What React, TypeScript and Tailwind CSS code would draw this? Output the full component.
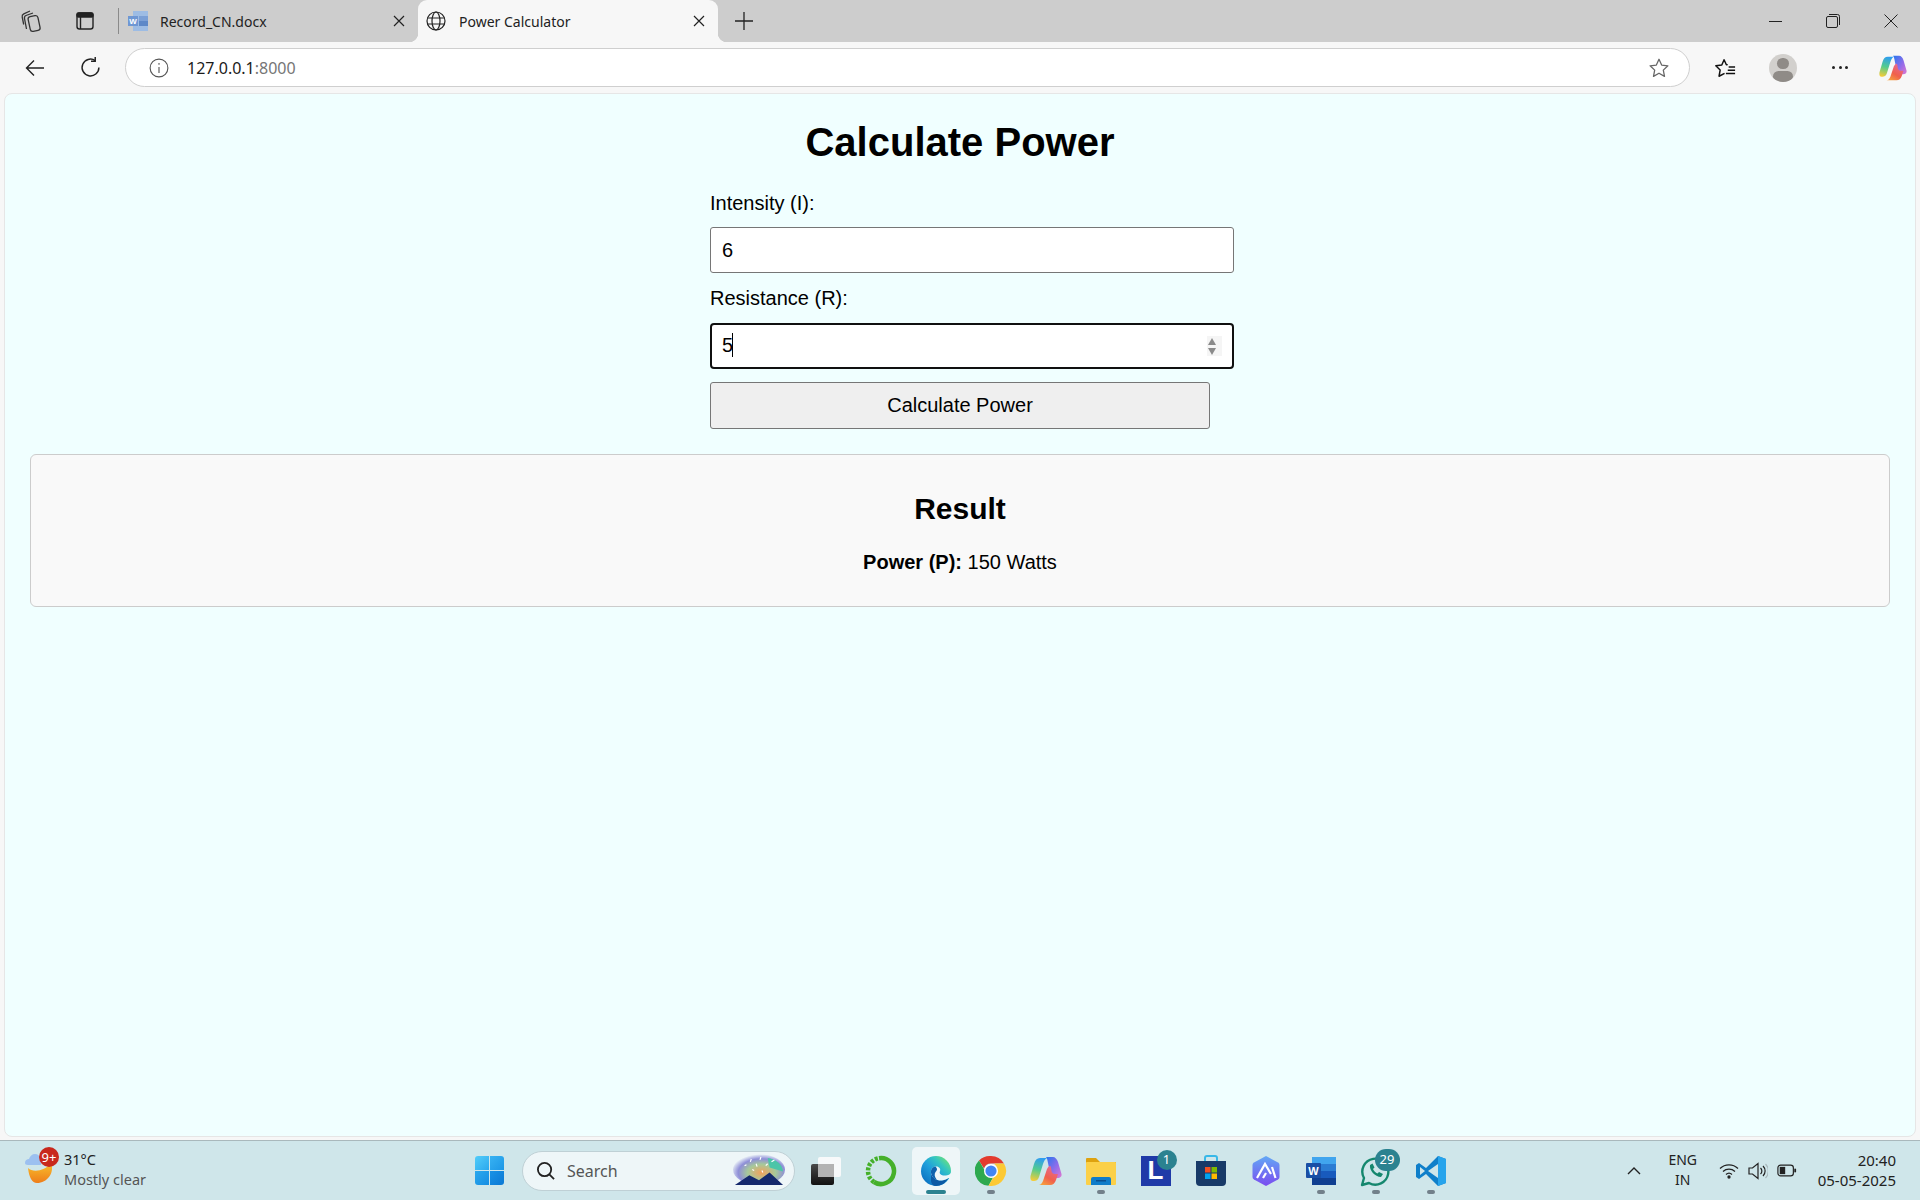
import React from 'react';

// taskbar app icons, all on a 32x32 box
function EdgeIcon() {
    return (
        <svg viewBox="0 0 32 32" className="w-[32px] h-[32px]">
            <defs>
                <linearGradient id="edgeA" x1="0.1" y1="0.9" x2="0.9" y2="0.1">
                    <stop offset="0" stopColor="#0b6fc0" />
                    <stop offset="0.45" stopColor="#1f9fdc" />
                    <stop offset="0.75" stopColor="#35c6c0" />
                    <stop offset="1" stopColor="#6de07a" />
                </linearGradient>
            </defs>
            <circle cx="16" cy="16" r="15" fill="url(#edgeA)" />
            <path d="M11 18C12 23 17 26 22 25.500C25 25 27 24 28.500 23C26 28 21 31 16 31C13 31 11.500 29 11 26Z" fill="#0c59a4" />
            <path d="M32 15C31 20 27 21 23 20.500C20 20 19 18 20 16C21 14 19 11 15.500 11.500C12 12 10.500 15 11 18C12 23 17 26 22 25.500C25 25 27 24 28.500 23L32 23Z" fill="#eef6f8" />
            <path d="M15.500 11.500C12 12 10.500 15 11 18C12 22 14 24 17 25C14.500 22 14 19 15.500 17C17 15.500 18 14 15.500 11.500Z" fill="#0f62ad" />
        </svg>
    );
}

function ChromeIcon() {
    return (
        <svg viewBox="0 0 32 32" className="w-[32px] h-[32px]">
            <path d="M16 1a15 15 0 0 1 13 7.500H16a7.500 7.500 0 0 0-7 5L4 5.500A15 15 0 0 1 16 1z" fill="#e33b2e" />
            <path d="M4 5.500l6.500 11.300a7.500 7.500 0 0 0 7.500 5.700L13.500 30.800A15 15 0 0 1 4 5.500z" fill="#2da94f" />
            <path d="M29 8.500A15 15 0 0 1 13.500 30.800l6.500-11.300a7.500 7.500 0 0 0-1-11z" fill="#fcc934" />
            <circle cx="16" cy="16" r="7" fill="#fff" />
            <circle cx="16" cy="16" r="5.600" fill="#4285f4" />
        </svg>
    );
}

function CopilotIcon({size}: {size: number}) {
    const id = `cp${size}`;
    return (
        <svg viewBox="0 0 32 32" style={{width: size, height: size}}>
            <defs>
                <linearGradient id={`${id}a`} x1="0.5" y1="0" x2="0.3" y2="1">
                    <stop offset="0" stopColor="#2f9df0" />
                    <stop offset="0.5" stopColor="#52cc8e" />
                    <stop offset="1" stopColor="#f4cc38" />
                </linearGradient>
                <linearGradient id={`${id}b`} x1="0" y1="0" x2="1" y2="1">
                    <stop offset="0" stopColor="#2677ee" />
                    <stop offset="0.55" stopColor="#8f6cea" />
                    <stop offset="1" stopColor="#e078d0" />
                </linearGradient>
                <linearGradient id={`${id}c`} x1="0.8" y1="0" x2="0.2" y2="1">
                    <stop offset="0" stopColor="#e66a9c" />
                    <stop offset="0.6" stopColor="#f0604c" />
                    <stop offset="1" stopColor="#f6a13c" />
                </linearGradient>
            </defs>
            <path d="M10 3h7c-2 1-3 3-4 6L9 22c-1 3-3 4-5 4H3c-2 0-3-2-2.500-5L4 9c1-4 3-6 6-6z" fill={`url(#${id}a)`} />
            <path d="M16 2h7c2 0 4 2 5 5l3.500 12c.5 2-1 4-4 4H24c-2 0-3-1-3.500-3L18 8c-.5-3-1-5-2-6z" fill={`url(#${id}b)`} />
            <path d="M20 11c-1 0-2 1-3 3l-4 12c-1 2-2 4-4.500 4H20c3 0 5-2 6-5l2-6h-3c-2 0-3-1-3.500-3-.3-3-.5-5-1.500-5z" fill={`url(#${id}c)`} />
        </svg>
    );
}

function TaskIcon({children, dot, active}: {children: React.ReactNode, dot?: boolean, active?: boolean}) {
    return (
        <div className="w-[55px] flex justify-center">
            <div className={`relative w-[48px] h-[48px] flex items-center justify-center rounded-[5px] ${active ? 'bg-[#eef6f8]' : ''}`}>
                <div className="relative w-[32px] h-[32px]">{children}</div>
                {active && <div className="absolute bottom-[1px] left-[14px] w-[20px] h-[4px] rounded-full bg-[#2b8290]" />}
                {dot && <div className="absolute bottom-[1px] left-[20px] w-[8px] h-[4px] rounded-full bg-[#72808a]" />}
            </div>
        </div>
    );
}

function Badge({text, wide}: {text: string, wide?: boolean}) {
    return (
        <div className={`absolute flex items-center justify-center rounded-full bg-[#2b8290] text-white text-[13px] leading-none ${wide ? 'w-[25px] h-[22px] -top-[6px] left-[15px]' : 'w-[20px] h-[20px] -top-[5px] left-[17px]'}`}>
            {text}
        </div>
    );
}

export default function App() {
    return (
        <div className="h-screen w-screen overflow-hidden flex flex-col bg-[#f7f7f7] font-['Noto_Sans',sans-serif] text-black">
            {/* tab strip */}
            <div className="h-[42px] shrink-0 flex items-end bg-[#cdcdcd]">
                <div className="h-[42px] w-[64px] flex items-center justify-center">
                    <svg viewBox="0 0 24 24" className="w-[24px] h-[24px]" fill="none" stroke="#333" strokeWidth="1.300">
                        <rect x="9" y="7" width="10" height="15" rx="2.500" transform="rotate(-12 14 14)" />
                        <path d="M6.500 20 4.500 9.500c-.3-1.500.3-2.500 1.500-3L13 4" />
                        <path d="M3.700 15.500 2.200 8c-.3-1.500.4-2.600 1.600-3.200L10 2" />
                    </svg>
                </div>
                <div className="h-[42px] w-[42px] flex items-center justify-center">
                    <svg viewBox="0 0 20 20" className="w-[20px] h-[20px]" fill="none" stroke="#222" strokeWidth="1.400">
                        <rect x="2" y="2" width="16" height="16" rx="2.500" />
                        <rect x="2" y="2" width="16" height="4" rx="1.500" fill="#222" />
                        <path d="M5.500 6v12" />
                    </svg>
                </div>
                <div className="h-[26px] w-px bg-[#8a8a8a] mb-[8px] ml-[12px]" />
                <div className="h-[42px] w-[299px] flex items-center pl-[9px] pr-[13px]">
                    <svg viewBox="0 0 20 20" className="w-[20px] h-[20px] shrink-0">
                        <rect x="5" y="0" width="15" height="20" fill="#9dbce4" />
                        <rect x="11" y="5" width="9" height="5" fill="#7a9fd6" />
                        <rect x="11" y="10" width="9" height="5" fill="#5d88c8" />
                        <rect x="0" y="5" width="10" height="10" fill="#6f97d3" />
                        <text x="5" y="13" textAnchor="middle" fontSize="8" fontWeight="700" fill="#fff" fontFamily="Liberation Sans">W</text>
                    </svg>
                    <span className="ml-[12px] text-[14px] text-[#222] flex-1">Record_CN.docx</span>
                    <svg viewBox="0 0 12 12" className="w-[12px] h-[12px]" stroke="#222" strokeWidth="1.200"><path d="M1 1l10 10M11 1L1 11" /></svg>
                </div>
                <div className="relative h-[42px] w-[300px] flex items-center bg-[#f7f7f7] rounded-t-[9px] pl-[8px] pr-[13px]">
                    <div className="absolute right-full bottom-0 w-[9px] h-[9px] bg-[radial-gradient(circle_at_0_0,#cdcdcd_9px,#f7f7f7_9.5px)]" />
                    <div className="absolute left-full bottom-0 w-[9px] h-[9px] bg-[radial-gradient(circle_at_100%_0,#cdcdcd_9px,#f7f7f7_9.5px)]" />
                    <svg viewBox="0 0 20 20" className="w-[20px] h-[20px] shrink-0" fill="none" stroke="#222" strokeWidth="1.200">
                        <circle cx="10" cy="10" r="9" />
                        <ellipse cx="10" cy="10" rx="4" ry="9" />
                        <path d="M1.500 7h17M1.500 13h17" />
                    </svg>
                    <span className="ml-[13px] text-[14px] text-[#222] flex-1">Power Calculator</span>
                    <svg viewBox="0 0 12 12" className="w-[12px] h-[12px]" stroke="#222" strokeWidth="1.200"><path d="M1 1l10 10M11 1L1 11" /></svg>
                </div>
                <div className="h-[42px] w-[52px] flex items-center justify-center">
                    <svg viewBox="0 0 18 18" className="w-[18px] h-[18px]" stroke="#222" strokeWidth="1.300"><path d="M9 0v18M0 9h18" /></svg>
                </div>
                <div className="flex-1" />
                <div className="h-[42px] w-[58px] flex items-center justify-center">
                    <div className="w-[13px] h-px bg-[#222]" />
                </div>
                <div className="h-[42px] w-[58px] flex items-center justify-center">
                    <svg viewBox="0 0 14 14" className="w-[14px] h-[14px]" fill="none" stroke="#222" strokeWidth="1">
                        <rect x="0.5" y="2.500" width="11" height="11" rx="1.500" />
                        <path d="M3 .5h8.500a2 2 0 0 1 2 2V11" />
                    </svg>
                </div>
                <div className="h-[42px] w-[58px] flex items-center justify-center">
                    <svg viewBox="0 0 14 14" className="w-[14px] h-[14px]" stroke="#222" strokeWidth="1"><path d="M.5.5l13 13M13.500.5l-13 13" /></svg>
                </div>
            </div>

            {/* address bar row */}
            <div className="h-[51px] shrink-0 flex items-center">
                <div className="w-[70px] flex items-center justify-center">
                    <svg viewBox="0 0 20 20" className="w-[20px] h-[20px]" fill="none" stroke="#222" strokeWidth="1.400"><path d="M19 10H1.500M9 2.500 1.500 10 9 17.500" /></svg>
                </div>
                <div className="w-[40px] flex items-center justify-center">
                    <svg viewBox="0 0 20 20" className="w-[21px] h-[21px]" fill="none" stroke="#222" strokeWidth="1.400"><path d="M14.500 3.400A8 8 0 1 0 18 10" /><path d="M14.500 0v4h-4" /></svg>
                </div>
                <div className="ml-[15px] w-[1565px] h-[39px] flex items-center bg-white border border-[#cfcfcf] rounded-full pl-[23px] pr-[19px]">
                    <svg viewBox="0 0 18 18" className="w-[20px] h-[20px]" fill="none" stroke="#555" strokeWidth="1"><circle cx="9" cy="9" r="8" /><path d="M9 8v5.500M9 4.500v1.500" /></svg>
                    <span className="ml-[18px] text-[16px] text-[#1b1b1b] flex-1">127.0.0.1<span className="text-[#767676]">:8000</span></span>
                    <svg viewBox="0 0 24 24" className="w-[22px] h-[22px]" fill="none" stroke="#666" strokeWidth="1.400" strokeLinejoin="round"><path d="M12 2.500l2.900 6.300 6.800.8-5 4.700 1.300 6.800-6-3.400-6 3.400 1.300-6.800-5-4.700 6.800-.8z" /></svg>
                </div>
                <div className="ml-[23px] w-[24px] flex items-center justify-center">
                    <svg viewBox="0 0 24 24" className="w-[22px] h-[22px]" fill="none" stroke="#111" strokeWidth="1.600" strokeLinejoin="round"><path d="M15 8.300 13.500 8.500 11 3 8.500 8.700 2 9.600l4.700 4.600L5.500 21l6-3.200M16 11h7M15 14.500h8M13 18h10" /></svg>
                </div>
                <div className="ml-[32px] w-[28px] h-[28px] rounded-full bg-[#d2d0cd] overflow-hidden flex flex-col items-center">
                    <div className="w-[12px] h-[12px] mt-[4px] rounded-full bg-[#8f8b87]" />
                    <div className="w-[20px] h-[12px] mt-[2px] rounded-full bg-[#8f8b87]" />
                </div>
                <div className="ml-[35px] flex gap-[3.5px]">
                    <div className="w-[3px] h-[3px] rounded-full bg-[#222]" />
                    <div className="w-[3px] h-[3px] rounded-full bg-[#222]" />
                    <div className="w-[3px] h-[3px] rounded-full bg-[#222]" />
                </div>
                <div className="ml-[31px] flex"><CopilotIcon size={28} /></div>
            </div>

            {/* page */}
            <div className="flex-1 mx-[4px] mb-[3px] rounded-[8px] bg-[#f0ffff] border border-[#e6e6e6] font-['Liberation_Sans',sans-serif] px-[25px] pt-[25px]">
                <h1 className="h-[46px] text-[40px] leading-[46px] font-bold text-center">Calculate Power</h1>
                <div className="w-[500px] mx-auto mt-[27px] text-[20px] leading-[23px]">
                    <label className="block">Intensity (I):</label>
                    <input readOnly value="6" className="block mt-[12px] w-[524px] h-[46px] px-[11px] bg-white border border-[#767676] rounded-[3px] outline-none" />
                    <label className="block mt-[14px]">Resistance (R):</label>
                    <div className="relative mt-[13px] w-[524px]">
                        <input readOnly value="5" className="block w-full h-[46px] px-[10px] pb-[2px] bg-white border-2 border-[#101010] rounded-[4px] outline-none" />
                        <div className="absolute left-[22px] top-[10px] w-px h-[24px] bg-black" />
                        <div className="absolute right-[12px] top-[13px] w-[15px] h-[20px] bg-[#f5f5f5] flex flex-col items-start pl-[1px] justify-center gap-[3px]">
                            <div className="w-0 h-0 border-x-[4.5px] border-x-transparent border-b-[7px] border-b-[#8a8a8a]" />
                            <div className="w-0 h-0 border-x-[4.5px] border-x-transparent border-t-[7px] border-t-[#8a8a8a]" />
                        </div>
                    </div>
                    <button className="block mt-[13px] w-[500px] h-[47px] bg-[#efefef] border border-[#767676] rounded-[3px] text-center text-[20px]">Calculate Power</button>
                </div>
                <div className="mt-[25px] h-[153px] rounded-[6px] border border-[#cccccc] bg-[#f9f9f9] text-center pt-[37px]">
                    <h2 className="text-[30px] leading-[34px] font-bold">Result</h2>
                    <p className="mt-[25px] text-[20px] leading-[23px]"><b>Power (P):</b> 150 Watts</p>
                </div>
            </div>

            {/* windows taskbar */}
            <div className="h-[60px] shrink-0 flex items-center bg-[#cfe6ea] border-t border-[#a9b8bc] pl-[25px]">
                <div className="relative w-[30px] h-[36px]">
                    <svg viewBox="0 0 30 36" className="w-[30px] h-[36px]">
                        <defs>
                            <linearGradient id="moon" x1="0.5" y1="0" x2="0.5" y2="1">
                                <stop offset="0" stopColor="#f9c02c" />
                                <stop offset="1" stopColor="#ee7d1a" />
                            </linearGradient>
                        </defs>
                        <path d="M0 10c0-3 2-4 4-4 1-3 3-5 6-5 3 0 5 2 6 5v6H3c-2 0-3-1-3-2z" fill="#9cc0f0" />
                        <path d="M3 15C8 20 20 18 26 10C30 20 22 30 12 30C7 30 4 24 3 15Z" fill="url(#moon)" />
                    </svg>
                    <div className="absolute -top-[6px] left-[14px] w-[20px] h-[20px] rounded-full bg-[#c8281c] text-white text-[13px] leading-[20px] text-center">9+</div>
                </div>
                <div className="ml-[9px] mb-[3px] w-[100px] text-[14.5px] leading-[20px]">
                    <div className="text-[#222]">31°C</div>
                    <div className="text-[#555]">Mostly clear</div>
                </div>
                <div className="ml-[311px] w-[29px] h-[29px] grid grid-cols-2 gap-[1.5px]">
                    <div className="bg-linear-to-br from-[#52cdf9] to-[#2aa8ee] rounded-tl-[3px]" />
                    <div className="bg-linear-to-br from-[#37b2f2] to-[#1c97e6] rounded-tr-[3px]" />
                    <div className="bg-linear-to-br from-[#2ba9ee] to-[#158de2] rounded-bl-[3px]" />
                    <div className="bg-linear-to-br from-[#1a93e6] to-[#0b78d4] rounded-br-[3px]" />
                </div>
                <div className="ml-[18px] w-[273px] h-[40px] rounded-full bg-[#eef6f8] border border-[#bfd0d5] flex items-center pl-[13px] pr-[9px] overflow-hidden">
                    <svg viewBox="0 0 20 20" className="w-[19px] h-[19px]" fill="none" stroke="#222" strokeWidth="1.900"><circle cx="9" cy="9" r="7" /><path d="M14 14l5 5" /></svg>
                    <span className="ml-[12px] text-[16px] text-[#555] flex-1">Search</span>
                    <svg viewBox="0 0 54 34" className="w-[52px] h-[33px]">
                        <defs>
                            <radialGradient id="sky" cx="0.55" cy="0.6" r="0.6">
                                <stop offset="0" stopColor="#f2a15c" />
                                <stop offset="0.45" stopColor="#a7c99a" />
                                <stop offset="0.75" stopColor="#8f8fd8" />
                                <stop offset="1" stopColor="#eef6f8" />
                            </radialGradient>
                        </defs>
                        <ellipse cx="27" cy="16" rx="27" ry="16" fill="url(#sky)" />
                        <path d="M36 4c8 1 15 6 16 14l-14-4z" fill="#4cc5a8" />
                        <path d="M2 32l15-10 10 5 11-8 14 13z" fill="#15296c" />
                        <path d="M12 12l2-1M18 8l1-3M24 10l1 3M28 6l1-3M34 12l2-2M20 16l2 1M30 17l1 2M40 8l3-2" stroke="#fff" strokeWidth="1.200" />
                    </svg>
                </div>
                <div className="ml-[3px] flex items-center">
                    <TaskIcon>
                        <div className="absolute left-[8px] top-[2px] w-[23px] h-[20px] bg-[#f7f9fa] rounded-[2px]" />
                        <div className="absolute left-[1px] top-[9px] w-[23px] h-[21px] bg-linear-to-b from-[#4a4a4a] to-[#111] rounded-[2px]" />
                        <div className="absolute left-[8px] top-[9px] w-[16px] h-[13px] bg-[#b3b3b3]" />
                    </TaskIcon>
                    <TaskIcon>
                        <svg viewBox="0 0 32 32" className="w-[32px] h-[32px]" fill="none">
                            <path d="M14 3.200A13 13 0 1 1 9 27" stroke="#45b02a" strokeWidth="4.500" />
                            <path d="M9 27A13 13 0 0 1 14 3.200" stroke="#45b02a" strokeWidth="4.500" strokeDasharray="3 1.500" />
                        </svg>
                    </TaskIcon>
                    <TaskIcon active><EdgeIcon /></TaskIcon>
                    <TaskIcon dot><ChromeIcon /></TaskIcon>
                    <TaskIcon><CopilotIcon size={32} /></TaskIcon>
                    <TaskIcon dot>
                        <svg viewBox="0 0 32 32" className="w-[32px] h-[32px]">
                            <path d="M1 4a1 1 0 0 1 1-1h9l4 4h16v4H1z" fill="#dea20f" />
                            <rect x="1" y="7" width="30" height="23" rx="1" fill="#fbd049" />
                            <path d="M6 30v-6a2 2 0 0 1 2-2h16a2 2 0 0 1 2 2v6z" fill="#0f7cc9" />
                            <rect x="11" y="25" width="10" height="1.500" fill="#0a4f8f" />
                        </svg>
                    </TaskIcon>
                    <TaskIcon>
                        <div className="absolute left-[1px] top-[1px] w-[30px] h-[30px] bg-[#1f3aa8] flex items-center justify-center text-white text-[26px] font-bold font-['Liberation_Sans',sans-serif]">L</div>
                        <Badge text="1" />
                    </TaskIcon>
                    <TaskIcon>
                        <svg viewBox="0 0 32 32" className="w-[32px] h-[32px]">
                            <path d="M10 7V3a2 2 0 0 1 2-2h8a2 2 0 0 1 2 2v4" fill="none" stroke="#38b8e8" strokeWidth="2" />
                            <path d="M1 6h30v21a4 4 0 0 1-4 4H5a4 4 0 0 1-4-4z" fill="#183a68" />
                            <rect x="10" y="12" width="5.500" height="5.500" fill="#f25022" />
                            <rect x="16.500" y="12" width="5.500" height="5.500" fill="#7fba00" />
                            <rect x="10" y="18.500" width="5.500" height="5.500" fill="#00a4ef" />
                            <rect x="16.500" y="18.500" width="5.500" height="5.500" fill="#ffb900" />
                        </svg>
                    </TaskIcon>
                    <TaskIcon>
                        <svg viewBox="0 0 32 32" className="w-[32px] h-[32px]">
                            <defs>
                                <linearGradient id="hexA" x1="0" y1="0" x2="0" y2="1">
                                    <stop offset="0" stopColor="#63a8f5" />
                                    <stop offset="1" stopColor="#7a4cf0" />
                                </linearGradient>
                            </defs>
                            <path d="M16 1l12 6.500a3 3 0 0 1 1.500 2.500v12a3 3 0 0 1-1.500 2.500L16 31 4 24.500A3 3 0 0 1 2.500 22V10A3 3 0 0 1 4 7.500z" fill="url(#hexA)" />
                            <path d="M7 23l8-14 6 10M13 23l3-5M22 12l3.500 11" fill="none" stroke="#fff" strokeWidth="2.200" />
                        </svg>
                    </TaskIcon>
                    <TaskIcon dot>
                        <svg viewBox="0 0 32 32" className="w-[32px] h-[32px]">
                            <rect x="7" y="2" width="24" height="7" fill="#41a5ee" />
                            <rect x="7" y="9" width="24" height="7" fill="#2b7cd3" />
                            <rect x="7" y="16" width="24" height="7" fill="#185abd" />
                            <rect x="7" y="23" width="24" height="7" fill="#103f91" />
                            <rect x="1" y="8" width="15" height="15" rx="1" fill="#1a4fa5" />
                            <text x="8.500" y="20" textAnchor="middle" fontSize="11" fontWeight="700" fill="#fff" fontFamily="Liberation Sans">W</text>
                        </svg>
                    </TaskIcon>
                    <TaskIcon dot>
                        <svg viewBox="0 0 32 32" className="w-[32px] h-[32px]" fill="none">
                            <path d="M2 30l2-7A13 13 0 1 1 9 28z" stroke="#15876e" strokeWidth="2.400" strokeLinejoin="round" />
                            <path d="M10 10c-1 5 5 12 11 12l2-3-4-2-1.500 1.500c-2-1-3.500-2.500-4.500-4.500l1.500-1.500-2-4z" fill="#15876e" />
                        </svg>
                        <Badge text="29" wide />
                    </TaskIcon>
                    <TaskIcon dot>
                        <svg viewBox="0 0 32 32" className="w-[32px] h-[32px]">
                            <path d="M23 1 11 13 4 8 1 10v12l3 2 7-5 12 12 8-3V4z" fill="#0f7fca" />
                            <path d="M23 1l8 3v24l-8 3z" fill="#27a4ec" />
                            <path d="M23 9 13 16l10 7z" fill="#cfe6ea" />
                            <path d="M5 12l5 4-5 4z" fill="#cfe6ea" />
                        </svg>
                    </TaskIcon>
                </div>
                <div className="flex-1" />
                <svg viewBox="0 0 14 8" className="w-[14px] h-[8px]" fill="none" stroke="#222" strokeWidth="1.400"><path d="M1 7l6-6 6 6" /></svg>
                <div className="ml-[24px] mb-[2px] w-[36px] text-center text-[14px] leading-[20px] text-[#222]">
                    <div>ENG</div>
                    <div>IN</div>
                </div>
                <div className="ml-[18px] flex items-center gap-[9px]">
                    <svg viewBox="0 0 20 16" className="w-[20px] h-[16px]" fill="none" stroke="#222" strokeWidth="1.300">
                        <path d="M1 5.500a13 13 0 0 1 18 0M4 8.500a9 9 0 0 1 12 0M7 11.500a4.500 4.500 0 0 1 6 0" />
                        <circle cx="10" cy="14" r="1" fill="#222" />
                    </svg>
                    <svg viewBox="0 0 20 18" className="w-[20px] h-[18px]" fill="none" stroke="#222" strokeWidth="1.200">
                        <path d="M1 6h3.500L10 1.500v15L4.500 12H1z" />
                        <path d="M12.500 6a4 4 0 0 1 0 6M15 4a7 7 0 0 1 0 10" />
                        <path d="M17.500 2a10 10 0 0 1 0 14" stroke="#a9b8bc" />
                    </svg>
                    <svg viewBox="0 0 22 14" className="w-[20px] h-[13px]" fill="none" stroke="#222" strokeWidth="1.300">
                        <rect x="1" y="1" width="17" height="12" rx="3" />
                        <rect x="3" y="3" width="6" height="8" fill="#222" stroke="none" />
                        <path d="M20 5v4" strokeWidth="2" />
                    </svg>
                </div>
                <div className="ml-[21px] mr-[24px] mb-[2px] text-right text-[15px] leading-[20px] text-[#222]">
                    <div>20:40</div>
                    <div>05-05-2025</div>
                </div>
            </div>
        </div>
    );
}
